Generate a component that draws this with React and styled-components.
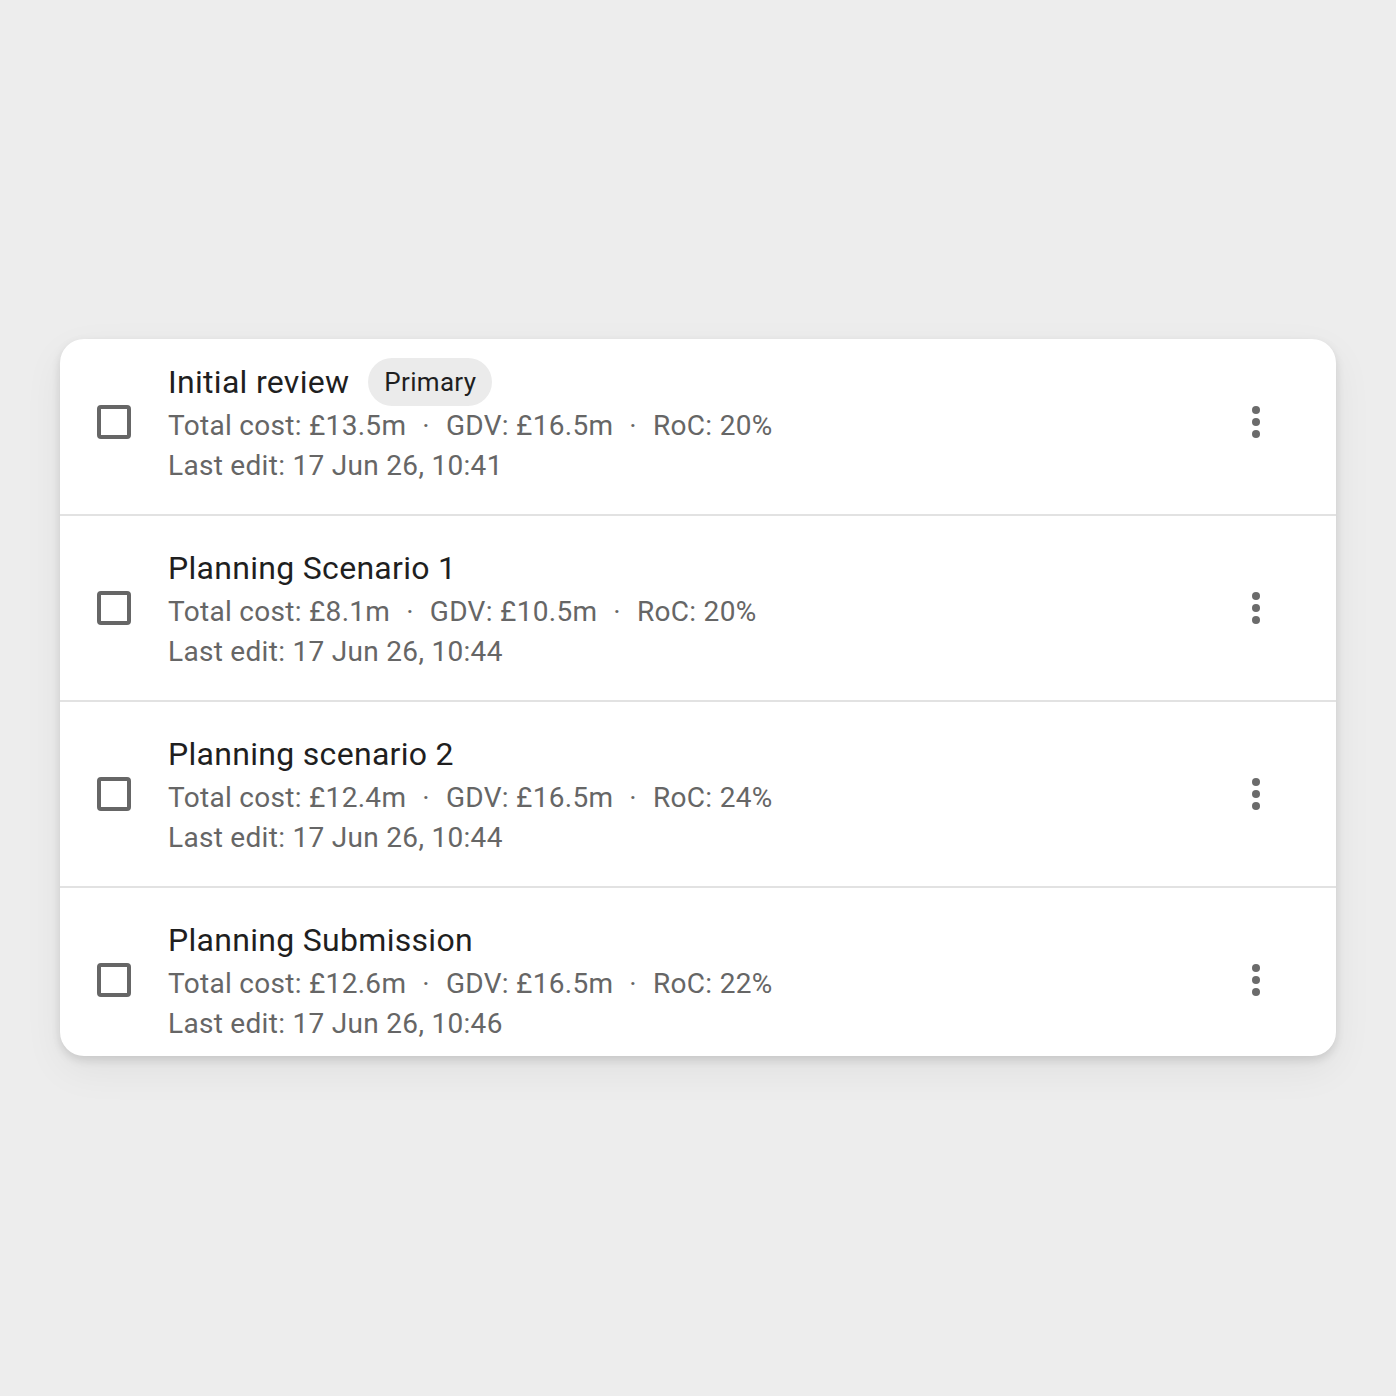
import styled, { createGlobalStyle } from "styled-components";

const GlobalStyle = createGlobalStyle`
  html, body {
    margin: 0;
    padding: 0;
    background: #ededed;
  }
  body {
    font-family: Roboto, "Liberation Sans", Arial, sans-serif;
  }
`;

const Page = styled.div`
  min-height: 1396px;
  padding: 339px 60px 0;
  box-sizing: border-box;
`;

const Card = styled.div`
  background: #fff;
  border-radius: 24px;
  height: 717px;
  overflow: hidden;
  box-shadow: 0 4px 10px rgba(0, 0, 0, 0.12), 0 14px 40px rgba(0, 0, 0, 0.06);
`;

// list is scrolled a little, so the first row is cut at the top
const List = styled.ul`
  list-style: none;
  margin: -9px 0 0;
  padding: 0;
`;

const Row = styled.li`
  height: 184px;
  display: flex;
  align-items: center;
  padding: 0 64px 0 37px;
  border-bottom: 2px solid #e2e2e2;
`;

const Check = styled.span`
  flex: none;
  width: 34px;
  height: 34px;
  box-sizing: border-box;
  border: 4px solid #666;
  border-radius: 4px;
  margin-right: 37px;
`;

const Body = styled.div`
  flex: 1;
  display: flex;
  flex-direction: column;
  letter-spacing: 0.3px;
`;

const TitleLine = styled.div`
  display: flex;
  align-items: center;
  height: 48px;
  gap: 19px;
`;

const Title = styled.span`
  font-size: 32px;
  color: #1f1f1f;
`;

const Chip = styled.span`
  height: 48px;
  padding: 0 16px;
  border-radius: 24px;
  background: #ebebeb;
  display: inline-flex;
  align-items: center;
  font-size: 26px;
  color: #1f1f1f;
`;

const Meta = styled.div`
  font-size: 28px;
  line-height: 40px;
  color: #666;
  white-space: nowrap;
`;

const Dot = styled.span`
  margin: 0 16px;
`;

const MenuButton = styled.button`
  flex: none;
  width: 32px;
  height: 48px;
  border: none;
  background: none;
  padding: 0;
  display: flex;
  align-items: center;
  justify-content: center;
  color: #6b6b6b;
`;

const rows = [
  { title: "Initial review", primary: true, cost: "£13.5m", gdv: "£16.5m", roc: "20%", edit: "17 Jun 26, 10:41" },
  { title: "Planning Scenario 1", cost: "£8.1m", gdv: "£10.5m", roc: "20%", edit: "17 Jun 26, 10:44" },
  { title: "Planning scenario 2", cost: "£12.4m", gdv: "£16.5m", roc: "24%", edit: "17 Jun 26, 10:44" },
  { title: "Planning Submission", cost: "£12.6m", gdv: "£16.5m", roc: "22%", edit: "17 Jun 26, 10:46" },
];

const Kebab = () => (
  <svg width="10" height="34" viewBox="0 0 10 34">
    <circle cx="5" cy="5" r="4" fill="currentColor" />
    <circle cx="5" cy="17" r="4" fill="currentColor" />
    <circle cx="5" cy="29" r="4" fill="currentColor" />
  </svg>
);

export default function App() {
  return (
    <>
      <GlobalStyle />
      <Page>
        <Card>
          <List>
            {rows.map((r) => (
              <Row key={r.title}>
                <Check />
                <Body>
                  <TitleLine>
                    <Title>{r.title}</Title>
                    {r.primary && <Chip>Primary</Chip>}
                  </TitleLine>
                  <Meta>
                    Total cost: {r.cost}
                    <Dot>·</Dot>
                    GDV: {r.gdv}
                    <Dot>·</Dot>
                    RoC: {r.roc}
                  </Meta>
                  <Meta>Last edit: {r.edit}</Meta>
                </Body>
                <MenuButton aria-label="More">
                  <Kebab />
                </MenuButton>
              </Row>
            ))}
          </List>
        </Card>
      </Page>
    </>
  );
}
